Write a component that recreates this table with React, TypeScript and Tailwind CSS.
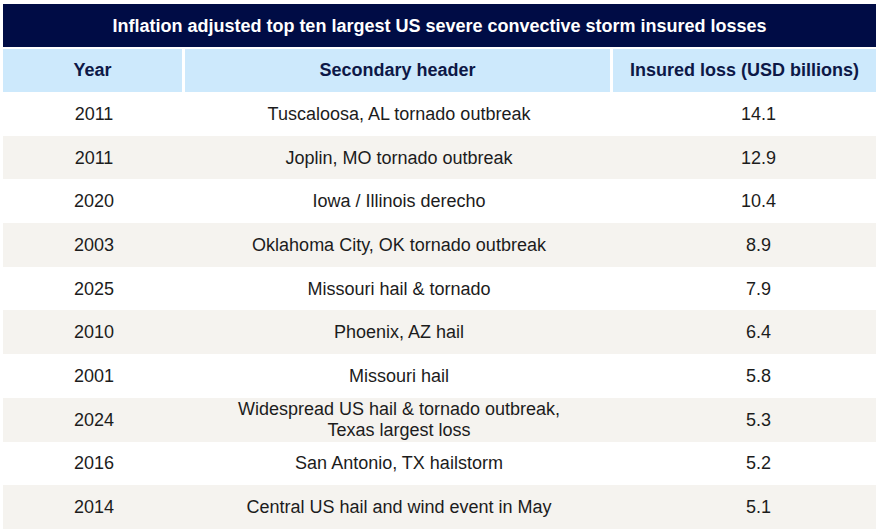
const rows: Array<[string, string, string]> = [
  ["2011", "Tuscaloosa, AL tornado outbreak", "14.1"],
  ["2011", "Joplin, MO tornado outbreak", "12.9"],
  ["2020", "Iowa / Illinois derecho", "10.4"],
  ["2003", "Oklahoma City, OK tornado outbreak", "8.9"],
  ["2025", "Missouri hail & tornado", "7.9"],
  ["2010", "Phoenix, AZ hail", "6.4"],
  ["2001", "Missouri hail", "5.8"],
  ["2024", "Widespread US hail & tornado outbreak,\nTexas largest loss", "5.3"],
  ["2016", "San Antonio, TX hailstorm", "5.2"],
  ["2014", "Central US hail and wind event in May", "5.1"],
];

export default function App() {
  return (
    <div className="w-[881px] h-[531px] bg-white pt-[4px] pl-[3px] font-['Liberation_Sans',Arial,sans-serif]">
      <div className="w-[873px]">
        <div className="h-[43px] pt-[2px] bg-[#000c45] flex items-center justify-center text-white font-bold text-[18px]">
          Inflation adjusted top ten largest US severe convective storm insured losses
        </div>
        <div className="mt-[2px] grid grid-cols-[179px_425px_263px] gap-x-[3px] h-[43px] text-[#0d1847] font-bold text-[18px]">
          <div className="bg-[#cde9fc] flex items-center justify-center">Year</div>
          <div className="bg-[#cde9fc] flex items-center justify-center">Secondary header</div>
          <div className="bg-[#cde9fc] flex items-center justify-center">Insured loss (USD billions)</div>
        </div>
        {rows.map(([year, event, loss], i) => (
          <div
            key={i}
            className={`grid grid-cols-[182px_428px_263px] h-[43.7px] pt-[1px] text-[18px] text-[#1c1c1c] ${i % 2 === 1 ? "bg-[#f5f3ef]" : "bg-white"}`}
          >
            <div className="flex items-center justify-center">{year}</div>
            <div className="flex items-center justify-center text-center whitespace-pre-line leading-[21px]">{event}</div>
            <div className="flex items-center justify-center pl-[28px]">{loss}</div>
          </div>
        ))}
      </div>
    </div>
  );
}
